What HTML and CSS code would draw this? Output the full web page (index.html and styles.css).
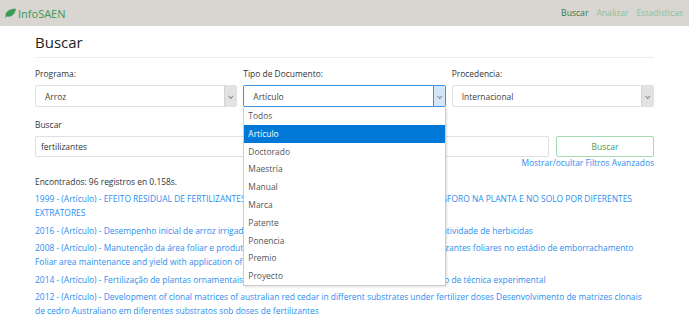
FILE: index.html
```html
<!DOCTYPE html>
<html lang="es">
<head>
<meta charset="utf-8">
<title>InfoSAEN - Buscar</title>
<link rel="stylesheet" href="styles.css">
</head>
<body>
<nav class="navbar">
  <a class="brand" href="#">
    <svg class="leaf" viewBox="0 0 12 10" width="12" height="10"><path d="M1 9.5 C2.5 8 3.5 7 5 6 M2 8 C1.5 4 4.5 1.5 11.5 1 C10.5 6 8 9 3 8.2 Z" fill="#3a9a5a" stroke="#3a9a5a" stroke-width="0.8" stroke-linecap="round"/></svg>
    <span>InfoSAEN</span>
  </a>
  <ul class="nav-links">
    <li><a class="active" href="#">Buscar</a></li>
    <li><a href="#">Analizar</a></li>
    <li><a href="#">Estadisticas</a></li>
  </ul>
</nav>
<main class="container">
  <h1 class="title">Buscar</h1>
  <div class="filters">
    <div class="field">
      <label>Programa:</label>
      <div class="select"><span>Arroz</span><span class="arrow"></span></div>
    </div>
    <div class="field">
      <label>Tipo de Documento:</label>
      <div class="select-wrap">
        <div class="select focused"><span>Artículo</span><span class="arrow"></span></div>
        <ul class="dropdown">
          <li>Todos</li>
          <li class="selected">Artículo</li>
          <li>Doctorado</li>
          <li>Maestría</li>
          <li>Manual</li>
          <li>Marca</li>
          <li>Patente</li>
          <li>Ponencia</li>
          <li>Premio</li>
          <li>Proyecto</li>
        </ul>
      </div>
    </div>
    <div class="field">
      <label>Procedencia:</label>
      <div class="select"><span>Internacional</span><span class="arrow"></span></div>
    </div>
  </div>
  <div class="search">
    <label>Buscar</label>
    <div class="search-row">
      <div class="input">fertilizantes</div>
      <button class="btn">Buscar</button>
    </div>
    <div class="toggle"><a href="#">Mostrar/ocultar Filtros Avanzados</a></div>
  </div>
  <p class="count">Encontrados: 96 registros en 0.158s.</p>
  <div class="results">
    <a href="#">1999 - (Artículo) - EFEITO RESIDUAL DE FERTILIZANTES FOSFATADOS NA DISPONIBILIDADE E TEOR DE FÓSFORO NA PLANTA E NO SOLO POR DIFERENTES EXTRATORES</a>
    <a href="#">2016 - (Artículo) - Desempenho inicial de arroz irrigado em função de doses de fertilizantes foliares e da atividade de herbicidas</a>
    <a href="#">2008 - (Artículo) - Manutenção da área foliar e produtividade do arroz de sequeiro sob aplicação de fertilizantes foliares no estádio de emborrachamento Foliar area maintenance and yield with application of foliar fertilizers</a>
    <a href="#">2014 - (Artículo) - Fertilização de plantas ornamentais em vasos: planejamento, manejo e aplicação do uso de técnica experimental</a>
    <a href="#">2012 - (Artículo) - Development of clonal matrices of australian red cedar in different substrates under fertilizer doses Desenvolvimento de matrizes clonais de cedro Australiano em diferentes substratos sob doses de fertilizantes</a>
  </div>
</main>
</body>
</html>
```
FILE: styles.css
```css
* { box-sizing: border-box; }
body {
  margin: 0;
  font-family: "Open Sans", "Noto Sans", sans-serif;
  font-size: 8.43px;
  color: #333;
  background: #fff;
}
a { text-decoration: none; }
.navbar {
  height: 26px;
  background: #d9d5d1;
  display: flex;
  align-items: center;
  justify-content: space-between;
  padding: 0 6px 0 4px;
}
.brand {
  display: flex;
  align-items: center;
  gap: 2px;
  color: #3a9a5a;
  font-size: 11px;
}
.leaf { display: block; }
.nav-links {
  list-style: none;
  margin: 0;
  padding: 0;
  display: flex;
  gap: 8px;
  font-size: 8.6px;
}
.nav-links a { color: #88c29b; }
.nav-links a.active { color: #2f7a4f; }
.container { padding: 0 35px; }
.title {
  font-size: 15px;
  font-weight: normal;
  line-height: 20px;
  margin: 6px 0 0;
  padding-bottom: 5px;
  border-bottom: 1px solid #eee;
  color: #222;
}
label {
  display: block;
  line-height: 12px;
  margin-bottom: 5px;
  color: #333;
}
.filters {
  display: grid;
  grid-template-columns: repeat(3, 1fr);
  gap: 6px;
  margin-top: 10px;
}
.select-wrap { position: relative; }
.select {
  height: 22px;
  border: 1px solid #e0e0e0;
  border-radius: 2px;
  display: flex;
  align-items: center;
  justify-content: space-between;
  padding-left: 9px;
  color: #444;
  background: #fff;
}
.arrow {
  width: 12px;
  align-self: stretch;
  background: #e2e2e2;
  border-left: 1px solid #d2d2d2;
  position: relative;
}
.arrow::after {
  content: "";
  position: absolute;
  left: 4px;
  top: 8px;
  width: 2.5px;
  height: 2.5px;
  border-right: 1px solid #888;
  border-bottom: 1px solid #888;
  transform: rotate(45deg);
}
.select.focused { border-color: #3d92e0; }
.select.focused .arrow { background: #d4e7f8; border-left-color: #3d92e0; }
.dropdown {
  position: absolute;
  left: 0;
  right: 0;
  top: 100%;
  margin: 0;
  padding: 0;
  list-style: none;
  background: #fff;
  border: 1px solid #ccc;
  border-top: none;
  box-shadow: 1px 1px 2px rgba(0,0,0,0.12);
  z-index: 5;
  color: #555;
}
.dropdown li {
  height: 17.8px;
  line-height: 17.8px;
  padding-left: 4px;
}
.dropdown li.selected { background: #0078d7; color: #fff; }
.search { margin-top: 12px; }
.search-row { display: flex; gap: 7px; }
.input {
  flex: 1;
  height: 21px;
  border: 1px solid #e0e0e0;
  border-radius: 2px;
  padding-left: 5px;
  display: flex;
  align-items: center;
  color: #333;
}
.btn {
  width: 98px;
  height: 21px;
  background: #fff;
  border: 1px solid #a6d8b4;
  border-radius: 2px;
  color: #3d9a5c;
  font: inherit;
}
.toggle { text-align: right; line-height: 12px; }
.toggle a { color: #2b8ef0; }
.count { margin: 7px 0 4px; line-height: 12px; }
.results { padding-right: 2px; }
.results a {
  display: block;
  color: #2b8ef0;
  line-height: 14px;
  margin-bottom: 3.5px;
}
```
